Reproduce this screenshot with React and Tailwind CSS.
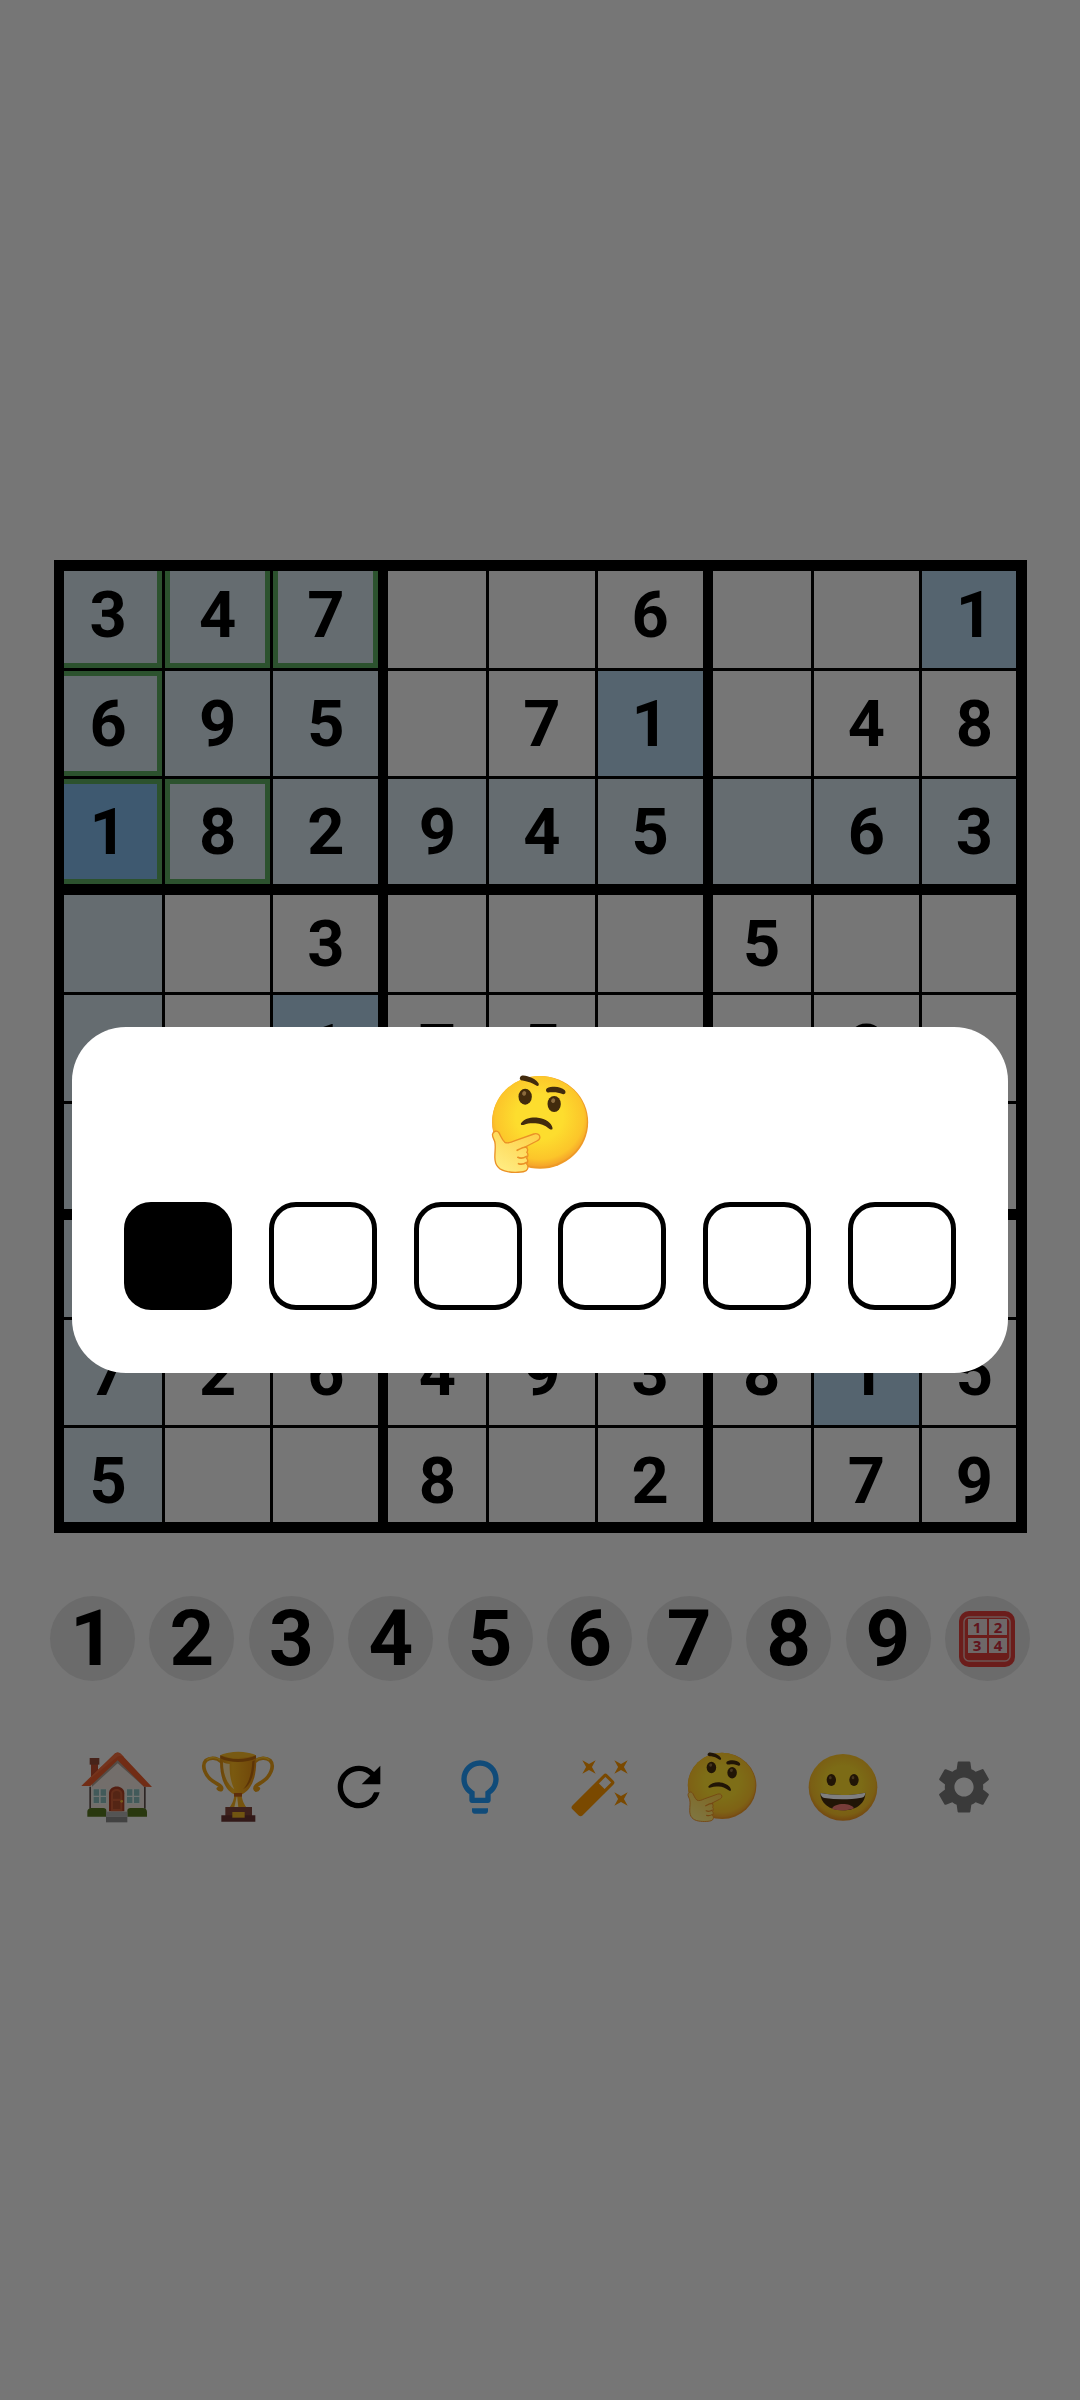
import React, { useState } from 'react';
import { MdRefresh, MdLightbulbOutline, MdAutoFixHigh, MdSettings } from 'react-icons/md';

const PUZZLE = [
  '347..6..1',
  '695.71.48',
  '182945.63',
  '..3...5..',
  '..175..8.',
  '.........',
  '.........',
  '726493815',
  '5..8.2.79',
];

const GUESSED = ['0-0', '0-1', '0-2', '1-0', '2-0', '2-1'];
const SELECTED = { row: 2, col: 0 };

const ThinkingFace = ({ className }) => (
  <svg viewBox="94 46 293 294" className={className} aria-hidden="true">
    <defs>
      <radialGradient id="thinkFace" cx="50%" cy="45%" r="55%">
        <stop offset="0.45" stopColor="#fddd2e" />
        <stop offset="0.85" stopColor="#fcc52a" />
        <stop offset="1" stopColor="#f5a32a" />
      </radialGradient>
      <linearGradient id="thinkHand" x1="0" y1="1" x2="0.7" y2="0">
        <stop offset="0" stopColor="#fff08a" />
        <stop offset="1" stopColor="#fed24b" />
      </linearGradient>
    </defs>
    <ellipse cx="241" cy="188" rx="144" ry="139" fill="#ee9a26" />
    <ellipse cx="239" cy="185" rx="142" ry="136" fill="url(#thinkFace)" />
    <path d="M180 55c2-9 13-8 23-5 15 4 27 11 33 21 3 7-2 10-8 6-11-7-21-11-33-13-10-1-16-3-15-9z" fill="#422b0d" />
    <path d="M259 94c-2-7 4-10 13-12 17-3 33 0 43 10 5 7 0 14-7 11-12-5-23-6-35-5-8 1-12 1-14-4z" fill="#422b0d" />
    <ellipse cx="196" cy="111" rx="20" ry="24" fill="#422b0d" />
    <ellipse cx="283" cy="133" rx="20" ry="24" fill="#422b0d" />
    <ellipse cx="193" cy="101" rx="6" ry="7" fill="#8a6a3d" transform="rotate(25 193 101)" />
    <ellipse cx="280" cy="123" rx="6" ry="7" fill="#8a6a3d" transform="rotate(25 280 123)" />
    <path d="M184 190c10-13 29-18 50-16 24 3 41 15 44 30 1 7-4 7-10 3-14-11-26-15-41-16-13-1-23 0-34 4-8 3-12 0-9-5z" fill="#422b0d" />
    <path
      d="M98 224c2-10 13-13 19-5 6 10 10 22 18 29 9 5 20 0 31-5l56-20c9-3 17 1 18 8 1 6-3 10-9 13l-35 18c8 2 9 10 5 16 5 5 4 13-1 17 5 5 5 13 0 17 6 5 6 14 0 20-10 7-40 7-57 4-26-4-38-19-38-43 0-20 3-33 0-46-2-8-8-15-7-23z"
      fill="url(#thinkHand)"
      stroke="#eb9126"
      strokeWidth="4"
    />
    <path d="M172 272c9-5 18-10 29-10M174 293c8 4 18 2 26-3M176 312c9 3 17 1 24-4" fill="none" stroke="#eb9126" strokeWidth="5" strokeLinecap="round" />
  </svg>
);

const GrinningFace = ({ className }) => (
  <svg viewBox="141 62 210 210" className={className} aria-hidden="true">
    <defs>
      <radialGradient id="grinFace" cx="50%" cy="45%" r="55%">
        <stop offset="0.5" stopColor="#f8d62c" />
        <stop offset="0.85" stopColor="#f5bd28" />
        <stop offset="1" stopColor="#e88f22" />
      </radialGradient>
    </defs>
    <ellipse cx="246" cy="168" rx="103" ry="100" fill="url(#grinFace)" />
    <ellipse cx="211" cy="146" rx="14" ry="18" fill="#422b0d" />
    <ellipse cx="279" cy="146" rx="14" ry="18" fill="#422b0d" />
    <ellipse cx="208" cy="139" rx="4" ry="5" fill="#8a6a3d" />
    <ellipse cx="276" cy="139" rx="4" ry="5" fill="#8a6a3d" />
    <path d="M178 185c40 8 95 8 135-1 1 30-25 53-67 53-43 0-68-23-68-52z" fill="#422b0d" />
    <path d="M178 185c40 8 95 8 135-1 0 8-4 14-12 15-36 6-74 6-110 1-8-1-12-7-13-15z" fill="#fff" />
    <path d="M213 232c8-18 56-18 66-1-19 8-47 8-66 1z" fill="#ee7a72" />
  </svg>
);

const House = ({ className }) => (
  <svg viewBox="60 62 222 222" className={className} aria-hidden="true">
    <path d="M93 104h21v45H93z" fill="#b8492c" />
    <path d="M89 86h29v20H89z" fill="#8f4734" />
    <path d="M90 165l83-78 83 78v88H90z" fill="#e6dcd6" />
    <path d="M172 88l-76 73v11l77-70 79 70v-11z" fill="#a8988c" />
    <path d="M88 172h5v66h-5zM252 172h5v66h-5z" fill="#5a4c48" />
    <path d="M64 170l97-94c8-9 16-9 24 0l91 97-24-1-79-79-82 77z" fill="#e2582a" />
    <path d="M64 170l97-94c8-9 16-9 24 0l8 8c-9-5-17-5-24 1z" fill="#e8683a" />
    <path d="M98 178h42v45H98zM199 178h42v45h-42z" fill="#dfe6e2" />
    <path
      d="M101 180h16v19h-16zM122 180h16v19h-16zM101 203h16v18h-16zM122 203h16v18h-16zM201 180h16v19h-16zM222 180h16v19h-16zM201 203h16v18h-16zM222 203h16v18h-16z"
      fill="#84b4b4"
    />
    <path d="M147 246v-54c0-27 46-27 46 0v54z" fill="#a83c22" />
    <path d="M153 246v-52c0-20 34-20 34 0v52z" fill="#c65a34" />
    <path d="M159 194c0-12 22-12 22 0v14h-22zM159 215h22v24h-22z" fill="#a84a2a" />
    <circle cx="185" cy="216" r="4" fill="#f2b632" />
    <path d="M82 262v-14c0-9 6-12 14-12h34c6 0 9 3 9 8v18zM202 262v-18c0-5 4-8 9-8h36c9 0 14 4 14 12v14z" fill="#52701e" />
    <path d="M138 247h64v15h-64z" fill="#a8a8a8" />
    <path d="M138 262h64v17h-64z" fill="#858585" />
  </svg>
);

const Trophy = ({ className }) => (
  <svg viewBox="422 60 222 222" className={className} aria-hidden="true">
    <defs>
      <linearGradient id="cup" x1="0" x2="1">
        <stop offset="0" stopColor="#d88a10" />
        <stop offset="0.35" stopColor="#f5b420" />
        <stop offset="1" stopColor="#e08c12" />
      </linearGradient>
    </defs>
    <path
      d="M483 95c-14-13-35-13-46-4-16 17 0 49 20 62 16 11 28 14 27 22-1 6-7 5-10 1M583 95c14-13 35-13 46-4 16 17 0 49-20 62-16 11-26 15-25 23 1 6 7 5 10 0"
      fill="none"
      stroke="#e39a16"
      strokeWidth="11"
      strokeLinecap="round"
    />
    <path
      d="M483 92c-14-12-34-12-43-3M583 92c14-12 34-12 43-3"
      fill="none"
      stroke="#f7c12c"
      strokeWidth="4"
      strokeLinecap="round"
    />
    <path d="M522 188h22c0 20 5 30 14 44h-50c9-14 14-24 14-44z" fill="#eda91c" />
    <path d="M530 196l-8 36h12z" fill="#fff0c0" />
    <path d="M480 76c28-10 79-10 107 0 4 59-11 101-41 117h-25c-29-14-46-57-41-117z" fill="url(#cup)" />
    <path d="M480 76c28 15 79 15 107 0v9c-27 15-80 15-107 0z" fill="#b9680f" />
    <path d="M480 76c28-14 79-14 107 0-28 10-79 10-107 0z" fill="#f0b526" />
    <path d="M488 97c6 3 13 5 20 5-1 29 4 56 14 76-21-15-34-43-34-81z" fill="#f9dfa4" />
    <path d="M576 94c-2 42-13 69-28 84 22-12 34-41 35-87z" fill="#b9680f" />
    <path d="M521 189h24v11h-24z" fill="#bd5d16" />
    <path d="M495 231h80v28h-80z" fill="#7c4238" />
    <path d="M483 256h102v19H483z" fill="#653330" />
    <path d="M516 246h37v17h-37z" fill="#e3ab22" />
  </svg>
);

const NotesIcon = ({ className }) => (
  <svg viewBox="0 0 58 58" className={className} aria-hidden="true">
    <rect x="1" y="1" width="56" height="56" rx="10" fill="#d63a36" />
    <rect x="6" y="7" width="46" height="44" rx="5" fill="none" stroke="#dcaaa8" strokeWidth="1.5" />
    <path d="M10 9h19v16H10zM31 9h18v16H31zM10 28h19v15H10zM31 28h18v15H31z" fill="#dcd0d0" />
    <g fill="#c22a3a" fontFamily="Open Sans, sans-serif" fontSize="15" fontWeight="700" textAnchor="middle">
      <text x="19" y="23">1</text>
      <text x="40" y="23">2</text>
      <text x="19" y="41">3</text>
      <text x="40" y="41">4</text>
    </g>
  </svg>
);

const cellTone = (row, col) => {
  const value = PUZZLE[row][col];
  if (row === SELECTED.row && col === SELECTED.col) return 'bg-[#7cb2e0]';
  if (value === PUZZLE[SELECTED.row][SELECTED.col]) return 'bg-[#aac8de]';
  const sameBox = row < 3 && col < 3;
  if (sameBox || row === SELECTED.row || col === SELECTED.col) return 'bg-[#cad8e0]';
  return 'bg-[#ececec]';
};

// Thick lines open every box, the outer frame is drawn over the board
const leftLine = (col) => {
  if (col === 0) return 'border-l-0';
  return col % 3 === 0 ? 'border-l-10' : 'border-l-3';
};
const topLine = (row) => {
  if (row === 0) return 'border-t-0';
  return row % 3 === 0 ? 'border-t-11' : 'border-t-3';
};

const Board = () => (
  <div className="relative ml-[54px] mr-[53px] aspect-square">
    <div className="grid grid-cols-9 grid-rows-9 h-full">
      {PUZZLE.map((line, row) =>
        line.split('').map((value, col) => (
          <button
            key={`${row}-${col}`}
            aria-label={`Row ${row + 1}, column ${col + 1}`}
            className={`flex items-center justify-center pt-0.5 border-black text-[65px] leading-none font-bold ${cellTone(row, col)} ${leftLine(col)} ${topLine(row)} ${GUESSED.includes(`${row}-${col}`) ? 'shadow-[inset_0_0_0_5px_#58a45c]' : ''}`}
          >
            {value === '.' ? '' : value}
          </button>
        ))
      )}
    </div>
    <div className="absolute inset-0 border-[11px] border-l-10 border-black pointer-events-none" />
  </div>
);

const NumberPad = () => (
  <div className="flex justify-between px-[50px] mt-[63px]">
    {[1, 2, 3, 4, 5, 6, 7, 8, 9].map((n) => (
      <button key={n} className="flex items-center justify-center size-[85px] rounded-full bg-[#d6d6d6] text-[78px] leading-none font-bold">
        {n}
      </button>
    ))}
    <button aria-label="Notes" className="flex items-center justify-center size-[85px] rounded-full bg-[#d6d6d6]">
      <NotesIcon className="size-[58px]" />
    </button>
  </div>
);

const TOOLS = [
  { label: 'Home', icon: <House className="size-[74px]" /> },
  { label: 'Scores', icon: <Trophy className="size-[74px]" /> },
  { label: 'Restart', icon: <MdRefresh className="size-16" /> },
  { label: 'Hint', icon: <MdLightbulbOutline className="size-16 text-[#2196f3]" /> },
  { label: 'Solve', icon: <MdAutoFixHigh className="size-16 text-[#f59300]" /> },
  { label: 'Think', icon: <ThinkingFace className="size-[70px]" /> },
  { label: 'Mood', icon: <GrinningFace className="size-[70px]" /> },
  { label: 'Settings', icon: <MdSettings className="size-16 text-[#757575]" /> },
];

const Toolbar = () => (
  <div className="grid grid-cols-8 px-14 mt-[53px] h-[106px]">
    {TOOLS.map((tool) => (
      <button key={tool.label} aria-label={tool.label} className="flex items-center justify-center">
        {tool.icon}
      </button>
    ))}
  </div>
);

const LevelDialog = () => {
  const [level, setLevel] = useState(0);

  return (
    <div className="fixed inset-0 flex items-center px-[72px] bg-black/50">
      <div role="dialog" aria-label="Level" className="w-full rounded-[54px] bg-white px-[52px] pt-12 pb-[63px]">
        <ThinkingFace className="size-[98px] mx-auto" />
        <div className="flex justify-between mt-[29px]">
          {[0, 1, 2, 3, 4, 5].map((n) => (
            <input
              key={n}
              type="radio"
              name="level"
              aria-label={`Level ${n + 1}`}
              checked={level === n}
              onChange={() => setLevel(n)}
              className="appearance-none size-[108px] rounded-[27px] border-5 border-black bg-white checked:bg-black"
            />
          ))}
        </div>
      </div>
    </div>
  );
};

const App = () => {
  return (
    <div className="min-h-screen flex flex-col justify-center bg-[#ececec] text-black font-[Roboto,sans-serif]">
      <Board />
      <NumberPad />
      <Toolbar />
      <LevelDialog />
    </div>
  );
};

export default App;
